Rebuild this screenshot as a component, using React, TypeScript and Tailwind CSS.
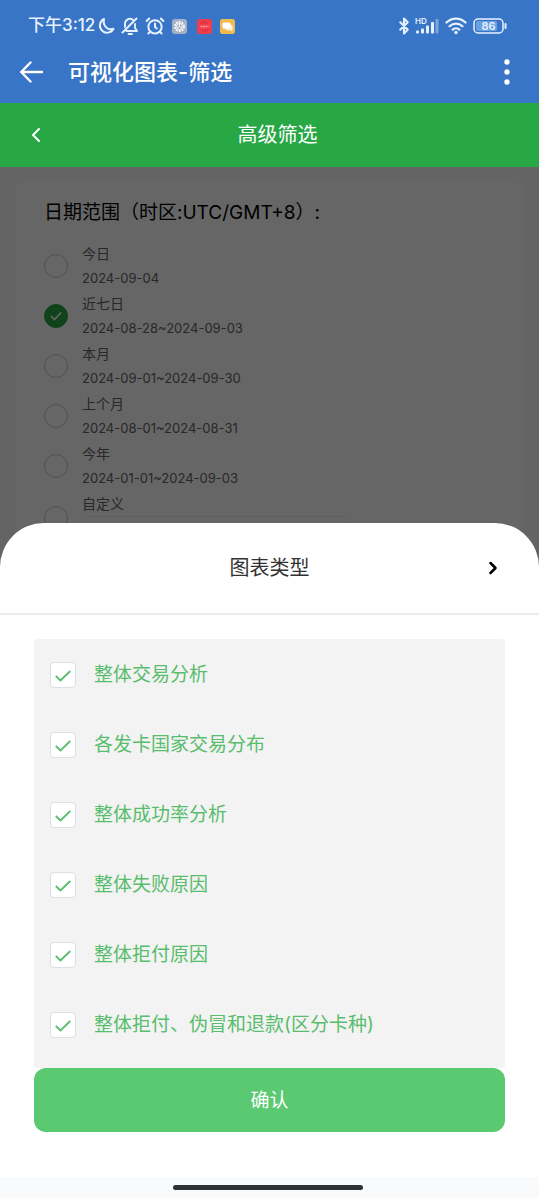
import React, { useState } from 'react';
import { AlarmClock, Bluetooth, ChevronLeft, ChevronRight } from 'lucide-react';

const ranges = [
    { id: 'today', label: '今日', value: '2024-09-04' },
    { id: 'week', label: '近七日', value: '2024-08-28~2024-09-03' },
    { id: 'month', label: '本月', value: '2024-09-01~2024-09-30' },
    { id: 'lastMonth', label: '上个月', value: '2024-08-01~2024-08-31' },
    { id: 'year', label: '今年', value: '2024-01-01~2024-09-03' }
];

const chartTypes = [
    '整体交易分析',
    '各发卡国家交易分布',
    '整体成功率分析',
    '整体失败原因',
    '整体拒付原因',
    '整体拒付、伪冒和退款(区分卡种)'
];

function StatusBar() {
    return (
        <div className="h-10 pl-7 pr-8 flex items-center justify-between text-[#e6f1ff]">
            <div className="flex items-center">
                <span className="text-[17px] font-medium whitespace-nowrap">下午3:12</span>
                <div className="ml-0.5 flex items-center gap-1.5">
                    <svg className="w-[18px] h-[18px]" viewBox="0 0 18 18" fill="none" stroke="currentColor" strokeWidth="2" strokeLinejoin="round">
                        <path d="M7 2A7.2 7.2 0 1 0 16.500 11.800C10.500 14 5.500 8.500 7 2Z" />
                    </svg>
                    <svg className="w-[18px] h-[18px]" viewBox="0 0 18 18" fill="none" stroke="currentColor" strokeWidth="1.9" strokeLinecap="round" strokeLinejoin="round">
                        <path d="M4 10V7A5 5 0 0 1 12 2.900M14 7V11L16 14H5.500M7.500 17H11M1.500 15.500L15.500 1.500" />
                    </svg>
                    <AlarmClock className="w-5 h-5" strokeWidth={2.4} />
                    <svg className="ml-px w-[15px] h-[15px]" viewBox="0 0 15 15">
                        <rect width="15" height="15" rx="3" fill="#a3b1c4" />
                        <circle cx="7.5" cy="7.5" r="4.6" fill="none" stroke="#fff" strokeWidth="1.6" strokeDasharray="2 .9" />
                        <circle cx="7.5" cy="7.5" r="3" fill="none" stroke="#fff" strokeWidth="1" />
                        <path d="M7.5 7.5V4.5M7.5 7.5L5 9M7.5 7.5L10 9" stroke="#fff" strokeWidth=".8" />
                    </svg>
                    <svg className="ml-1 w-[15px] h-[15px]" viewBox="0 0 15 15">
                        <rect width="15" height="15" rx="3" fill="#ee3d4d" />
                        <path d="M4 4.6A4.6 4.6 0 0 1 11 4.6M4 10.4A4.6 4.6 0 0 0 11 10.4" fill="none" stroke="#c92c3c" />
                        <path d="M3.500 7.500H11.500" stroke="#ff9aa2" strokeWidth="1.600" strokeDasharray="2 .5" />
                    </svg>
                    <svg className="ml-0.5 w-[15px] h-[15px]" viewBox="0 0 16 16">
                        <rect width="16" height="16" rx="3" fill="#f0ba4d" />
                        <rect x="5.500" y="6" width="8" height="6" rx="2" fill="#fff" opacity=".8" />
                        <path d="M4.200 3.800H9.800A1.700 1.700 0 0 1 11.500 5.500V7.800A1.700 1.700 0 0 1 9.800 9.500H5.500L3.500 11V9.500Q2.500 9 2.500 8V5.500A1.700 1.700 0 0 1 4.200 3.800Z" fill="#fff" />
                        <path d="M11 11.500L13 13.200V11Z" fill="#fff" />
                    </svg>
                </div>
            </div>
            <div className="flex items-center">
                <Bluetooth className="w-[18px] h-[18px]" strokeWidth={2.8} />
                <svg className="ml-0.5 w-6 h-[18px]" viewBox="0 0 24 18" fill="currentColor">
                    <text x="0" y="7" fontSize="8" fontWeight="600">HD</text>
                    <rect x="1" y="13.500" width="3" height="3" rx="1" />
                    <rect x="6" y="11.500" width="3" height="5" rx="1" />
                    <rect x="11" y="8.500" width="3" height="8" rx="1" />
                    <rect x="16" y="5" width="3" height="11.500" rx="1" />
                    <rect x="20.500" y="2" width="3" height="14.500" rx="1" opacity=".4" />
                </svg>
                <svg className="ml-1.5 w-[22px] h-[18px]" viewBox="0 0 22 18" fill="none" stroke="currentColor" strokeWidth="2.300" strokeLinecap="round">
                    <path d="M1.500 5.500A13.500 13.500 0 0 1 20.500 5.500M4.600 9.200A9 9 0 0 1 17.400 9.200M7.700 12.600A4.800 4.800 0 0 1 14.300 12.600" />
                    <circle cx="11" cy="15.500" r="1.700" fill="currentColor" stroke="none" />
                </svg>
                <svg className="ml-1.5 w-[34px] h-4" viewBox="0 0 34 16">
                    <rect x="1" y="1" width="29" height="14" rx="4" fill="none" stroke="currentColor" strokeWidth="1.500" />
                    <rect x="3" y="3" width="21" height="10" rx="2" fill="#6ba0e0" />
                    <path d="M32.500 6V10" stroke="currentColor" strokeWidth="2" strokeLinecap="round" />
                    <text x="15.500" y="12" fontSize="11" fontWeight="600" textAnchor="middle" fill="currentColor">86</text>
                </svg>
            </div>
        </div>
    );
}

function RadioMark({ id, checked, onChange }: { id: string; checked: boolean; onChange: () => void }) {
    return (
        <span className="grid shrink-0 place-items-center">
            <input
                type="radio"
                id={id}
                name="range"
                checked={checked}
                onChange={onChange}
                className="col-start-1 row-start-1 w-6 h-6 appearance-none rounded-full border border-[#c8c9cc] checked:border-[#28a745] checked:bg-[#28a745]"
            />
            {checked && (
                <svg className="col-start-1 row-start-1 w-3 h-3 text-white pointer-events-none" viewBox="0 0 12 12" fill="none" stroke="currentColor" strokeWidth="1.600">
                    <path d="M1 6L4.500 9.500L11.200 2.500" />
                </svg>
            )}
        </span>
    );
}

export default function App() {
    const [range, setRange] = useState('week');
    const [selected, setSelected] = useState<string[]>(chartTypes);

    const toggle = (name: string) => {
        setSelected(prev => (prev.includes(name) ? prev.filter(n => n !== name) : [...prev, name]));
    };

    return (
        <div className="h-screen flex flex-col overflow-hidden bg-white font-['Inter','Noto_Sans_CJK_SC',sans-serif]">
            {/* App header */}
            <header className="shrink-0 bg-[#3875c6] pt-1.5 pb-[5px]">
                <StatusBar />
                <div className="h-[52px] pl-5 pr-[27px] flex items-center">
                    <button type="button" aria-label="返回" className="text-white">
                        <svg className="w-6 h-6" viewBox="0 0 24 24" fill="none" stroke="currentColor" strokeWidth="2.400" strokeLinecap="round" strokeLinejoin="round">
                            <path d="M22 12H1.500M10.500 2.500L1.200 12L10.500 21.500" />
                        </svg>
                    </button>
                    <h1 className="ml-6 flex-1 text-[22px] font-medium text-white">可视化图表-筛选</h1>
                    <button type="button" aria-label="更多" className="text-white">
                        <svg className="w-2.5 h-7" viewBox="0 0 10 28" fill="currentColor">
                            <circle cx="5" cy="4" r="2.700" />
                            <circle cx="5" cy="14" r="2.700" />
                            <circle cx="5" cy="24" r="2.700" />
                        </svg>
                    </button>
                </div>
            </header>

            {/* Page title */}
            <div className="shrink-0 h-16 pl-6 pr-8 grid grid-cols-[24px_1fr] items-center bg-[#28a745] text-white">
                <button type="button" aria-label="上一页">
                    <ChevronLeft className="w-6 h-6" strokeWidth={2} />
                </button>
                <h2 className="text-xl text-center">高级筛选</h2>
            </div>

            <main className="relative flex-1 min-h-0 overflow-hidden bg-[#fafafa] px-4 pt-[15px]">
                {/* Date range */}
                <section className="h-full rounded-lg bg-white px-7 pt-4">
                    <h3 className="text-[19px] leading-[30px] text-black whitespace-nowrap">日期范围（时区:UTC/GMT+8）:</h3>
                    <div className="mt-[13px]">
                        {ranges.map(r => (
                            <div key={r.id} className="h-[50px] flex items-center gap-3.5">
                                <RadioMark id={r.id} checked={range === r.id} onChange={() => setRange(r.id)} />
                                <label htmlFor={r.id} className="text-[#646566]">
                                    <span className="block text-sm leading-[25px]">{r.label}</span>
                                    <span className="block text-[13px] leading-[25px]">{r.value}</span>
                                </label>
                            </div>
                        ))}
                        <div className="flex items-center gap-3.5">
                            <RadioMark id="custom" checked={range === 'custom'} onChange={() => setRange('custom')} />
                            <div>
                                <label htmlFor="custom" className="block text-sm leading-[25px] text-[#646566]">自定义</label>
                                <input type="text" aria-label="自定义日期" className="block w-[268px] h-7 rounded-md border border-[#ebedf0]" />
                            </div>
                        </div>
                    </div>
                </section>

                {/* Bottom sheet */}
                <div className="absolute inset-0 flex flex-col justify-end bg-black/60">
                    <div role="dialog" aria-label="图表类型" className="rounded-t-[44px] bg-white pb-[45px]">
                        <div className="h-[92px] pl-9 pr-8 grid grid-cols-[24px_1fr_28px] items-center border-b-2 border-[#ebebeb]">
                            <h2 className="col-start-2 text-xl text-center text-[#323233]">图表类型</h2>
                            <button type="button" aria-label="下一步" className="justify-self-center text-black">
                                <ChevronRight className="w-5 h-5" strokeWidth={3} />
                            </button>
                        </div>
                        <div className="mt-6 mx-[34px]">
                            <div className="rounded bg-[#f3f3f3] pt-px pb-2">
                                {chartTypes.map((name, i) => (
                                    <div key={name} className="h-[70px] px-4 flex items-center gap-[18px]">
                                        <span className="grid place-items-center">
                                            <input
                                                type="checkbox"
                                                id={`chart-${i}`}
                                                checked={selected.includes(name)}
                                                onChange={() => toggle(name)}
                                                className="col-start-1 row-start-1 w-[26px] h-[26px] appearance-none rounded border border-[#dcdfe6] bg-white"
                                            />
                                            {selected.includes(name) && (
                                                <svg className="col-start-1 row-start-1 w-4 h-4 pointer-events-none" viewBox="0 0 16 16" fill="none" stroke="#58bd6c" strokeWidth="1.800">
                                                    <path d="M.8 9L5.500 13.500L15.300 4" />
                                                </svg>
                                            )}
                                        </span>
                                        <label htmlFor={`chart-${i}`} className="text-[19px] text-[#58bd6c]">{name}</label>
                                    </div>
                                ))}
                            </div>
                            <button type="button" className="w-full h-16 pt-0.5 rounded-xl bg-[#5ac972] text-[19px] text-white">
                                确认
                            </button>
                        </div>
                    </div>
                </div>
            </main>

            {/* Gesture bar */}
            <footer className="shrink-0 h-[21px] pr-1 flex items-center justify-center bg-[#f9fafc]">
                <div className="w-[190px] h-[5px] rounded-full bg-[#2f3133]" />
            </footer>
        </div>
    );
}
